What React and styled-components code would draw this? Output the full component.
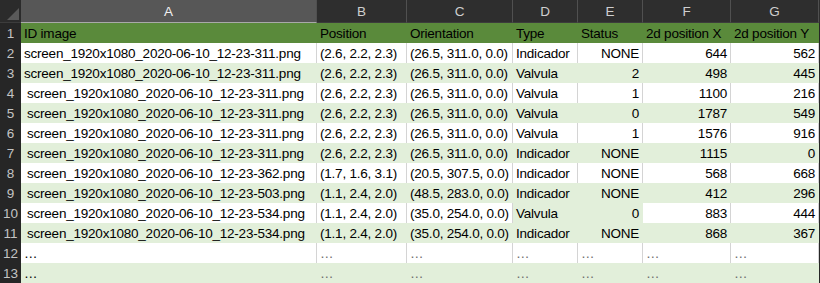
import React from 'react';
import styled, { createGlobalStyle } from 'styled-components';

const GlobalStyle = createGlobalStyle`
  html, body {
    margin: 0;
    padding: 0;
    background: #262626;
  }
  body {
    font-family: "Liberation Sans", Arial, sans-serif;
  }
`;

const COLS = '21px 296px 90px 106px 65px 65px 88px 88px 1px';

const Sheet = styled.div`
  width: 820px;
  height: 283px;
  overflow: hidden;
  background: #262626;
`;

const HeaderBar = styled.div`
  display: grid;
  grid-template-columns: ${COLS};
  height: 23px;
  background: #2e2e2e;
`;

const Corner = styled.div`
  position: relative;
  background: #2b2b2b;
  border-bottom: 1px solid #3c3c3c;
  box-sizing: border-box;

  &::after {
    content: '';
    position: absolute;
    right: 2px;
    bottom: 2px;
    width: 0;
    height: 0;
    border-left: 12px solid transparent;
    border-bottom: 12px solid #5a5a5a;
  }
`;

const ColLetter = styled.div`
  display: flex;
  align-items: center;
  justify-content: center;
  box-sizing: border-box;
  font-size: 13.5px;
  color: ${({ $active }) => ($active ? '#f0f0f0' : '#cfcfcf')};
  background: ${({ $active }) => ($active ? '#575757' : '#2e2e2e')};
  border-right: 1px solid #505050;
  border-bottom: 1px solid ${({ $active }) => ($active ? '#a9a9a9' : '#3c3c3c')};
`;

const Row = styled.div`
  display: grid;
  grid-template-columns: ${COLS};
  height: 20px;
`;

const RowNum = styled.div`
  background: #262626;
  color: #c4c4c4;
  font-size: 13.5px;
  line-height: 19px;
  padding-top: 1px;
  text-align: center;
`;

const Cell = styled.div`
  box-sizing: border-box;
  height: 20px;
  padding: 1px 3px 0 ${({ $indent }) => ($indent ? '6px' : '3px')};
  line-height: 19px;
  font-size: 13.5px;
  letter-spacing: -0.22px;
  white-space: pre;
  overflow: hidden;
  text-align: ${({ $right }) => ($right ? 'right' : 'left')};
  color: ${({ $dim }) => ($dim ? '#6b6b6b' : '#000')};
  background: ${({ $band }) =>
    $band === 'head' ? '#5a8a3b' : $band ? '#e2efda' : '#ffffff'};
  border-right: 1px solid
    ${({ $band }) => ($band === 'head' ? '#5a8a3b' : $band ? '#e2efda' : '#d4d4d4')};
`;

const letters = ['A', 'B', 'C', 'D', 'E', 'F', 'G'];

const headers = ['ID image', 'Position', 'Orientation', 'Type', 'Status', '2d position X', '2d position Y'];

const rows = [
  ['screen_1920x1080_2020-06-10_12-23-311.png', '(2.6, 2.2, 2.3)', '(26.5, 311.0, 0.0)', 'Indicador', 'NONE', '644', '562'],
  ['screen_1920x1080_2020-06-10_12-23-311.png', '(2.6, 2.2, 2.3)', '(26.5, 311.0, 0.0)', 'Valvula', '2', '498', '445'],
  ['screen_1920x1080_2020-06-10_12-23-311.png', '(2.6, 2.2, 2.3)', '(26.5, 311.0, 0.0)', 'Valvula', '1', '1100', '216'],
  ['screen_1920x1080_2020-06-10_12-23-311.png', '(2.6, 2.2, 2.3)', '(26.5, 311.0, 0.0)', 'Valvula', '0', '1787', '549'],
  ['screen_1920x1080_2020-06-10_12-23-311.png', '(2.6, 2.2, 2.3)', '(26.5, 311.0, 0.0)', 'Valvula', '1', '1576', '916'],
  ['screen_1920x1080_2020-06-10_12-23-311.png', '(2.6, 2.2, 2.3)', '(26.5, 311.0, 0.0)', 'Indicador', 'NONE', '1115', '0'],
  ['screen_1920x1080_2020-06-10_12-23-362.png', '(1.7, 1.6, 3.1)', '(20.5, 307.5, 0.0)', 'Indicador', 'NONE', '568', '668'],
  ['screen_1920x1080_2020-06-10_12-23-503.png', '(1.1, 2.4, 2.0)', '(48.5, 283.0, 0.0)', 'Indicador', 'NONE', '412', '296'],
  ['screen_1920x1080_2020-06-10_12-23-534.png', '(1.1, 2.4, 2.0)', '(35.0, 254.0, 0.0)', 'Valvula', '0', '883', '444'],
  ['screen_1920x1080_2020-06-10_12-23-534.png', '(1.1, 2.4, 2.0)', '(35.0, 254.0, 0.0)', 'Indicador', 'NONE', '868', '367'],
  ['…', '…', '…', '…', '…', '…', '…'],
  ['…', '…', '…', '…', '…', '…', '…'],
];

// columns E, F, G hold numbers -> right aligned
const rightCols = [4, 5, 6];

export default function App() {
  return (
    <Sheet>
      <GlobalStyle />
      <HeaderBar>
        <Corner />
        {letters.map((l) => (
          <ColLetter key={l} $active={l === 'A'}>{l}</ColLetter>
        ))}
        <div />
      </HeaderBar>

      <Row>
        <RowNum>1</RowNum>
        {headers.map((h) => (
          <Cell key={h} $band="head">{h}</Cell>
        ))}
        <div />
      </Row>

      {rows.map((r, i) => {
        const n = i + 2;
        const green = n % 2 === 1;
        const filler = r[0] === '…';
        return (
          <Row key={n}>
            <RowNum>{n}</RowNum>
            {r.map((v, c) => {
              // row 10 has a stray fill on Type / Status
              const band = green || (n === 10 && (c === 3 || c === 4));
              return (
                <Cell
                  key={c}
                  $band={band}
                  $right={!filler && rightCols.includes(c)}
                  $indent={c === 0 && n >= 4 && !filler}
                  $dim={filler && c > 0}
                >
                  {v}
                </Cell>
              );
            })}
            <div />
          </Row>
        );
      })}
    </Sheet>
  );
}
